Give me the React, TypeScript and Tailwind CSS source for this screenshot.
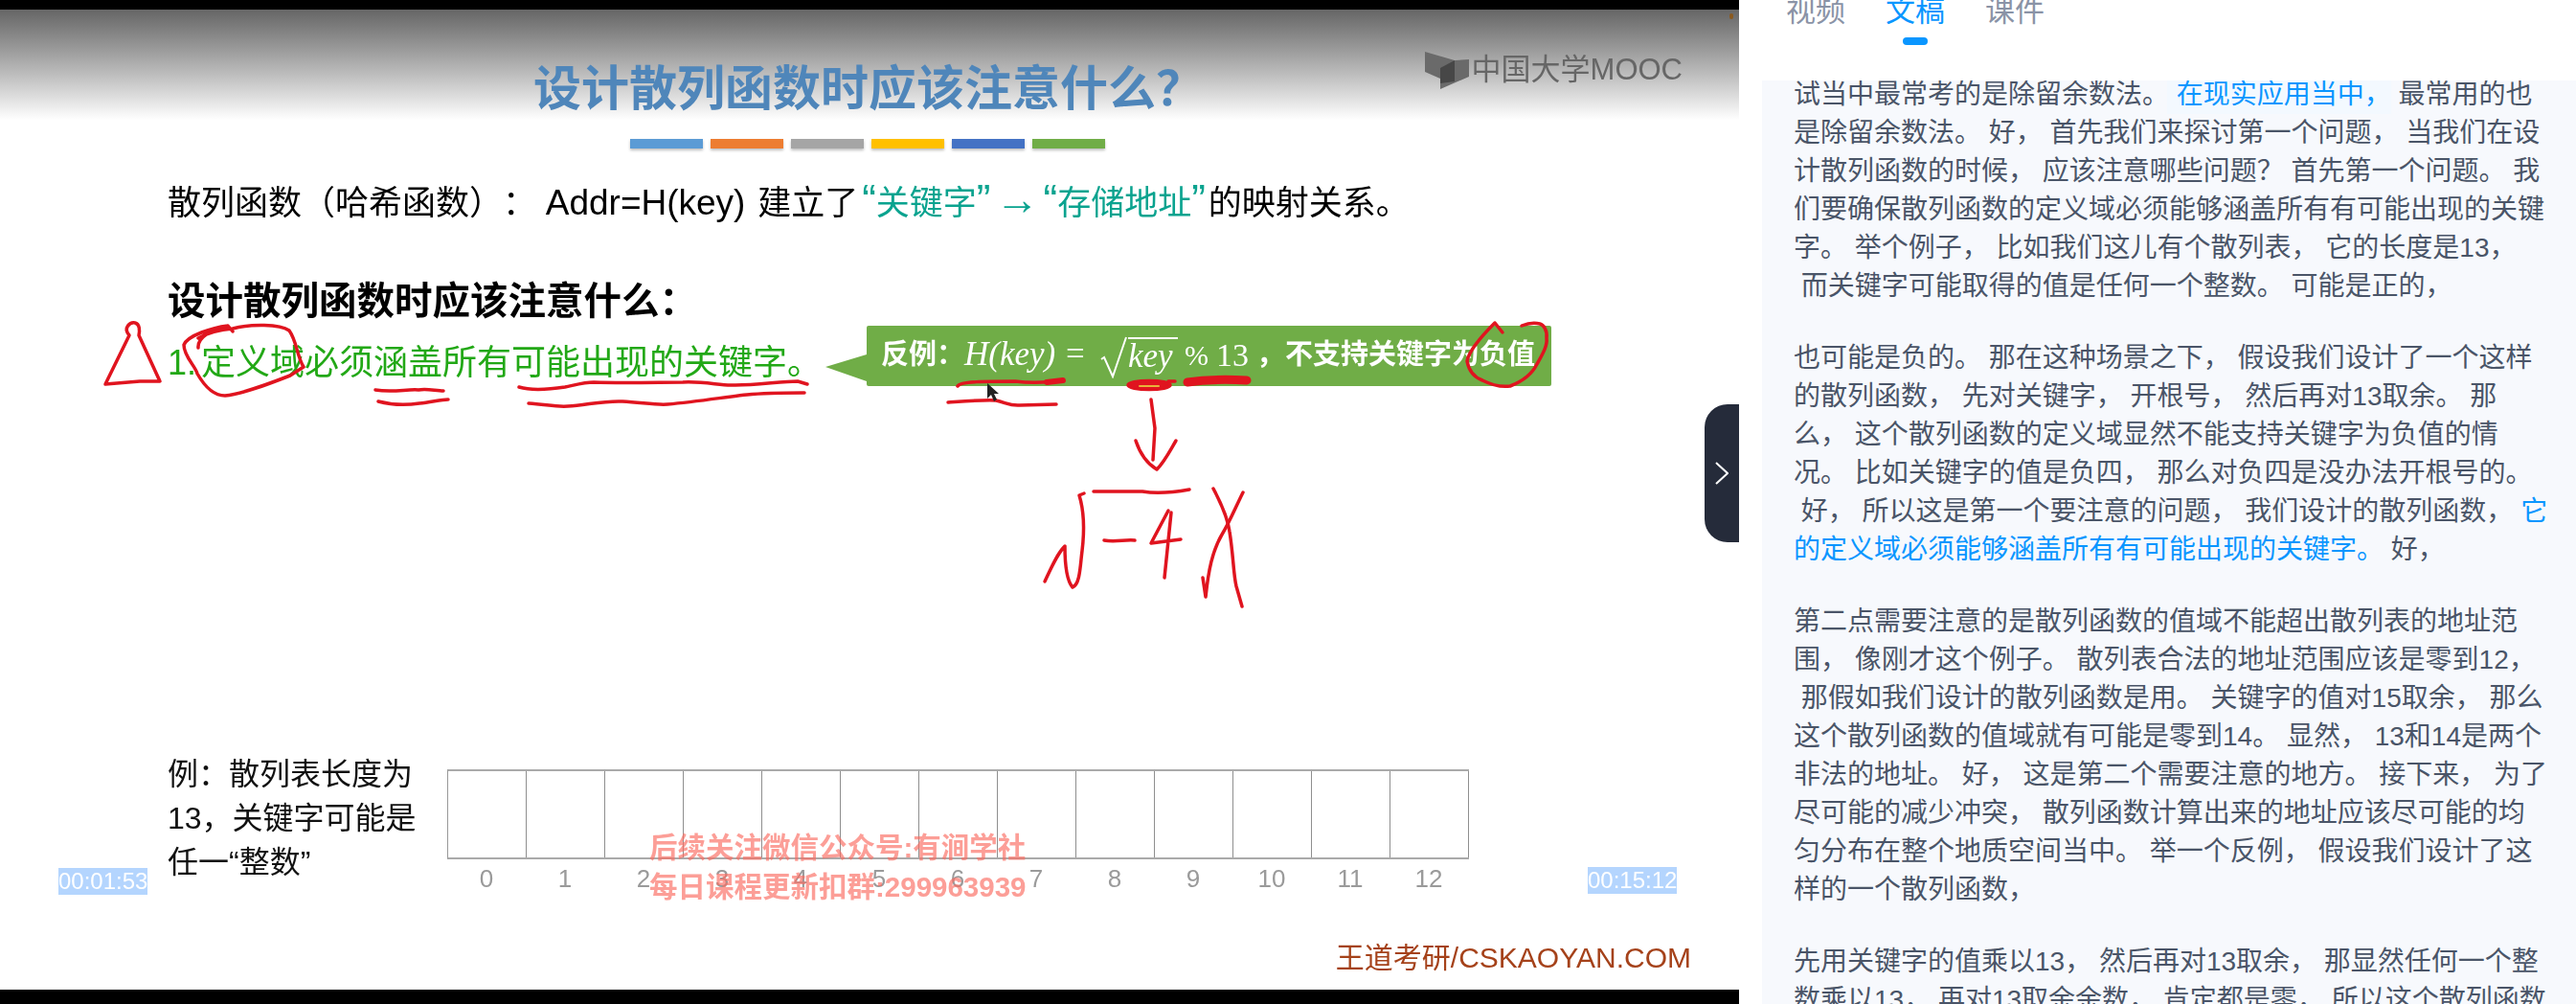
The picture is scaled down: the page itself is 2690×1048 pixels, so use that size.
const fontStack = "font-['Liberation_Sans','Noto_Sans_CJK_SC',sans-serif]";

const bars = ["bg-[#5b9bd5]", "bg-[#ed7d31]", "bg-[#a5a5a5]", "bg-[#ffc000]", "bg-[#4472c4]", "bg-[#70ad47]"];
const slots = Array.from({ length: 13 }, (_, i) => i);

type Line = { text: string; blue?: boolean; soft?: boolean }[];

const t = (text: string): Line => [{ text }];

const paragraphs: Line[][] = [
  [
    [{ text: "试当中最常考的是除留余数法。 " }, { text: "在现实应用当中，", blue: true, soft: true }, { text: " 最常用的也" }],
    t("是除留余数法。 好， 首先我们来探讨第一个问题， 当我们在设"),
    t("计散列函数的时候， 应该注意哪些问题？ 首先第一个问题。 我"),
    t("们要确保散列函数的定义域必须能够涵盖所有有可能出现的关键"),
    t("字。 举个例子， 比如我们这儿有个散列表， 它的长度是13，"),
    t(" 而关键字可能取得的值是任何一个整数。 可能是正的，"),
  ],
  [
    t("也可能是负的。 那在这种场景之下， 假设我们设计了一个这样"),
    t("的散列函数， 先对关键字， 开根号， 然后再对13取余。 那"),
    t("么， 这个散列函数的定义域显然不能支持关键字为负值的情"),
    t("况。 比如关键字的值是负四， 那么对负四是没办法开根号的。"),
    [{ text: " 好， 所以这是第一个要注意的问题， 我们设计的散列函数， " }, { text: "它", blue: true }],
    [{ text: "的定义域必须能够涵盖所有有可能出现的关键字。", blue: true }, { text: " 好，" }],
  ],
  [
    t("第二点需要注意的是散列函数的值域不能超出散列表的地址范"),
    t("围， 像刚才这个例子。 散列表合法的地址范围应该是零到12，"),
    t(" 那假如我们设计的散列函数是用。 关键字的值对15取余， 那么"),
    t("这个散列函数的值域就有可能是零到14。 显然， 13和14是两个"),
    t("非法的地址。 好， 这是第二个需要注意的地方。 接下来， 为了"),
    t("尽可能的减少冲突， 散列函数计算出来的地址应该尽可能的均"),
    t("匀分布在整个地质空间当中。 举一个反例， 假设我们设计了这"),
    t("样的一个散列函数，"),
  ],
  [
    t("先用关键字的值乘以13， 然后再对13取余， 那显然任何一个整"),
    t("数乘以13， 再对13取余余数， 肯定都是零， 所以这个散列函数"),
  ],
];

function MoocLogo() {
  return (
    <div className="flex items-start gap-[3px] pt-[44px]">
      <svg width="46" height="39" viewBox="0 0 46 39">
        <polygon points="0,0 31,9 31,28 16,28 0,21" fill="#6a6a6a" />
        <polygon points="46,8 46,26 16,39 16,28 16,17 31,9" fill="#6a6a6a" />
        <polygon points="31,9 31,31 16,33 16,17" fill="#474747" />
      </svg>
      <span className="mt-[1px] text-[31px] leading-[36px] text-[#666]">中国大学MOOC</span>
    </div>
  );
}

function Callout() {
  return (
    <div className="relative flex h-[63px] w-[715px] items-center rounded-[2px] bg-[#70ad47] pb-[2px] pl-[15px] font-bold text-white">
      <svg className="absolute top-[30px] -left-[43px]" width="43" height="28" viewBox="0 0 43 28">
        <polygon points="0,13 43,0 43,28" fill="#70ad47" />
      </svg>
      <span className="w-[87px] text-[29px]">反例：</span>
      <span className="w-[106px] font-['Liberation_Serif',serif] text-[35px] font-normal italic">H(key)</span>
      <span className="w-[36px] font-['Liberation_Serif',serif] text-[35px] font-normal">=</span>
      <svg width="29" height="44" viewBox="0 0 29 44" className="mt-[4px]">
        <path d="M1 24 L4 22 L13 42 L27 1" fill="none" stroke="#fff" strokeWidth="2" />
      </svg>
      <span className="w-[52px] border-t-2 border-white font-['Liberation_Serif',serif] text-[35px] leading-[36px] font-normal italic">key</span>
      <span className="ml-[7px] w-[33px] font-['Liberation_Serif',serif] text-[30px] font-normal">%</span>
      <span className="w-[42px] font-['Liberation_Serif',serif] text-[34px] font-normal">13</span>
      <span className="w-[30px] text-[29px]">，</span>
      <span className="text-[29px]">不支持关键字为负值</span>
    </div>
  );
}

function InkLayer() {
  return (
    <svg className="pointer-events-none absolute top-0 left-0" width="1816" height="1048" viewBox="0 0 1816 1048" fill="none" stroke="#e0141f" strokeWidth="3.5" strokeLinecap="round" strokeLinejoin="round">
      <path d="M110 401 L135 350 C128 342 136 336 141 337 C146 338 146 345 145 350 L167 398 L146 398 L110 401" />
      <path d="M207 363 C206 352 222 343 238 340 L243 346 M238 340 C222 342 196 350 192 360 C192 372 204 382 206 390 C214 404 224 413 235 413 C254 411 280 401 303 392 L317 383 C310 372 310 356 302 345 C292 338 262 338 243 343 C230 344 216 348 207 353" />
      <path d="M392 407 C410 410 425 406 437 407 C445 405 455 408 463 408" />
      <path d="M395 419 C410 423 425 423 438 421 C450 420 460 417 468 417" />
      <path d="M542 404 C555 408 570 407 590 404 C600 402 610 399 620 399 C650 400 690 399 713 399 C735 398 750 402 763 402 C785 403 815 398 833 398 L843 401" />
      <path d="M552 421 C570 422 580 425 593 424 C612 423 630 418 650 419 C670 420 685 423 697 422 C730 419 760 414 780 412 C800 410 820 410 840 410" />
      <path d="M1561 337 C1548 350 1534 365 1532 377 C1534 388 1540 394 1548 397 C1560 403 1570 404 1577 403 C1590 398 1600 390 1605 380 C1612 368 1616 360 1615 353 C1616 345 1612 339 1608 338 C1600 336 1594 338 1589 340 M1561 337 L1569 347" />
      <path d="M1000 403 C1003 398 1030 398 1060 398 C1075 400 1090 400 1110 397" />
      <path d="M1093 399 L1110 397" strokeWidth="6" />
      <path d="M990 420 C1005 419 1030 417 1040 418 C1050 420 1055 424 1065 423 L1103 422" />
      <ellipse cx="1200" cy="402" rx="22" ry="4.5" fill="#e0141f" />
      <path d="M1220 398 L1227 398" />
      <path d="M1190 403 L1210 403" stroke="#e9b23a" strokeWidth="2" />
      <path d="M1240 399 C1260 396 1285 396 1302 397" strokeWidth="9" />
      <path d="M1202 417 L1206 447 L1204 480" />
      <path d="M1186 460 C1190 472 1198 484 1208 490 C1216 482 1222 470 1228 460" />
      <path d="M1091 607 C1098 592 1104 578 1112 570 C1112 585 1113 605 1120 613 C1128 610 1128 590 1130 575 C1133 550 1131 530 1127 517 L1132 515" />
      <path d="M1142 513 L1193 513 C1205 515 1225 514 1242 511" />
      <path d="M1153 564 C1165 566 1175 563 1185 564" />
      <path d="M1220 533 L1202 567 L1233 563 M1223 535 L1216 603" />
      <path d="M1267 510 C1275 525 1282 540 1284 555 C1288 580 1288 600 1291 612 L1297 633" />
      <path d="M1298 514 C1290 530 1284 545 1276 558 C1266 575 1262 595 1259 623 L1256 603" />
      <polygon points="1031,400 1031,416 1035,412 1038,419 1041,417 1038,411 1043,411" fill="#222" stroke="none" />
    </svg>
  );
}

function Slide() {
  return (
    <div className="relative flex min-h-0 flex-1 flex-col bg-white blur-[0.5px]">
      <header className="flex h-[115px] shrink-0 justify-between bg-gradient-to-b from-[#666] to-white pr-[59px] pl-[557px]">
        <h1 className="pt-[57px] text-[50px] leading-[52px] font-bold whitespace-nowrap text-[#4f86ba]">设计散列函数时应该注意什么？</h1>
        <MoocLogo />
      </header>
      <div className="mt-[20px] flex gap-2 pl-[658px]">
        {bars.map((bar) => (
          <div key={bar} className={`h-[10px] w-[76px] shadow-[0_2px_3px_rgba(0,0,0,0.25)] ${bar}`} />
        ))}
      </div>
      <div className="flex flex-col pl-[175px]">
        <p className="mt-[37px] h-[40px] text-[35px] leading-[40px] whitespace-nowrap text-black">
          散列函数（哈希函数）： <span className="mr-[3px] text-[37px]">Addr=H(key)</span> 建立了
          <span className="text-[#0aa38f]">
            <span className="pl-[4px] text-[44px] leading-[0]">“</span>关键字<span className="pr-[5px] text-[44px] leading-[0]">”</span>
            <span className="pr-[4px] text-[46px] leading-[0]">→</span>
            <span className="text-[44px] leading-[0]">“</span>存储地址<span className="pr-[3px] text-[44px] leading-[0]">”</span>
          </span>
          的映射关系。
        </p>
        <p className="mt-[62px] text-[39.5px] leading-[40px] font-bold whitespace-nowrap text-black">设计散列函数时应该注意什么：</p>
        <div className="mt-[6px] flex items-start">
          <p className="mt-[19px] flex w-[730px] text-[36px] leading-[40px] whitespace-nowrap text-[#22a816]">
            <span className="w-[35px]">1.</span>定义域必须涵盖所有可能出现的关键字。
          </p>
          <Callout />
        </div>
        <div className="mt-[382px] flex items-start">
          <p className="w-[292px] text-[32px] leading-[46px] text-[#111]">
            例：散列表长度为
            <br />
            13，关键字可能是
            <br />
            任一“整数”
          </p>
          <div className="mt-[18px]">
            <div className="grid h-[94px] grid-cols-[repeat(13,82px)] border-y-2 border-l border-y-[#aaa] border-l-[#999]">
              {slots.map((n) => (
                <div key={n} className="border-r border-[#8f8f8f]" />
              ))}
            </div>
            <div className="mt-[6px] grid grid-cols-[repeat(13,82px)] text-center text-[26px] leading-[28px] text-[#9a9a9a]">
              {slots.map((n) => (
                <span key={n}>{n}</span>
              ))}
            </div>
          </div>
        </div>
      </div>
      <p className="mt-auto pr-[50px] pb-[15px] text-right text-[30px] leading-[36px] text-[#a5421a]">王道考研/CSKAOYAN.COM</p>

      <div className="absolute top-[854px] left-[678px] text-[29.5px] leading-[41px] font-bold whitespace-nowrap text-[#fb6a60]/65">
        <p>后续关注微信公众号:有涧学社</p>
        <p>每日课程更新扣群:299963939</p>
      </div>
      <span className="absolute top-[896px] left-[61px] h-[28px] bg-[#b4d5fe] text-[24px] leading-[28px] text-white">00:01:53</span>
      <span className="absolute top-[895px] left-[1658px] h-[28px] bg-[#b4d5fe] text-[24px] leading-[28px] text-white">00:15:12</span>
      <span className="absolute top-[4px] right-[6px] h-[6px] w-[4px] rounded-full bg-[#8a5a20]" />
    </div>
  );
}

function Transcript() {
  return (
    <div className="-mt-[5px] flex flex-col gap-[35px] pl-[33px] text-[28px] leading-[40px] text-[#4a5568]">
      {paragraphs.map((lines, i) => (
        <div key={i}>
          {lines.map((line, j) => (
            <div key={j} className="whitespace-pre">
              {line.map((seg, k) => (
                <span
                  key={k}
                  className={
                    seg.soft
                      ? "-ml-[10px] inline-block bg-[#f3f9ff] pl-[10px] text-[#0a96ff]"
                      : seg.blue
                        ? "text-[#0a96ff]"
                        : undefined
                  }
                >
                  {seg.text}
                </span>
              ))}
            </div>
          ))}
        </div>
      ))}
    </div>
  );
}

export default function App() {
  return (
    <div className={`flex h-[1048px] w-[2690px] overflow-hidden bg-white [text-spacing-trim:space-all] ${fontStack}`}>
      <div className="relative flex h-full w-[1816px] shrink-0 flex-col bg-black">
        <div className="h-[10px] shrink-0 bg-black" />
        <Slide />
        <div className="h-[15px] shrink-0 bg-black" />
        <InkLayer />
        <button className="absolute top-[422px] right-0 flex h-[144px] w-[36px] items-center justify-center rounded-l-[24px] bg-[#252b3a]">
          <svg width="14" height="24" viewBox="0 0 14 24" fill="none" stroke="#fff" strokeWidth="2">
            <path d="M1 1 L13 12 L1 23" />
          </svg>
        </button>
      </div>
      <div className="flex min-w-0 flex-1 flex-col pl-[24px]">
        <nav className="flex h-[84px] shrink-0 gap-[42px] overflow-hidden pl-[25px] text-[31px] text-[#8a93a6]">
          <span className="-mt-[4px] leading-[32px]">视频</span>
          <div className="-mt-[4px] flex flex-col items-center">
            <span className="leading-[32px] text-[#0a96ff]">文稿</span>
            <span className="mt-[11px] h-2 w-[26px] rounded-full bg-[#0a96ff]" />
          </div>
          <span className="-mt-[4px] leading-[32px]">课件</span>
        </nav>
        <div className="min-h-0 flex-1 overflow-hidden bg-[#f7f9fd]">
          <Transcript />
        </div>
      </div>
    </div>
  );
}
